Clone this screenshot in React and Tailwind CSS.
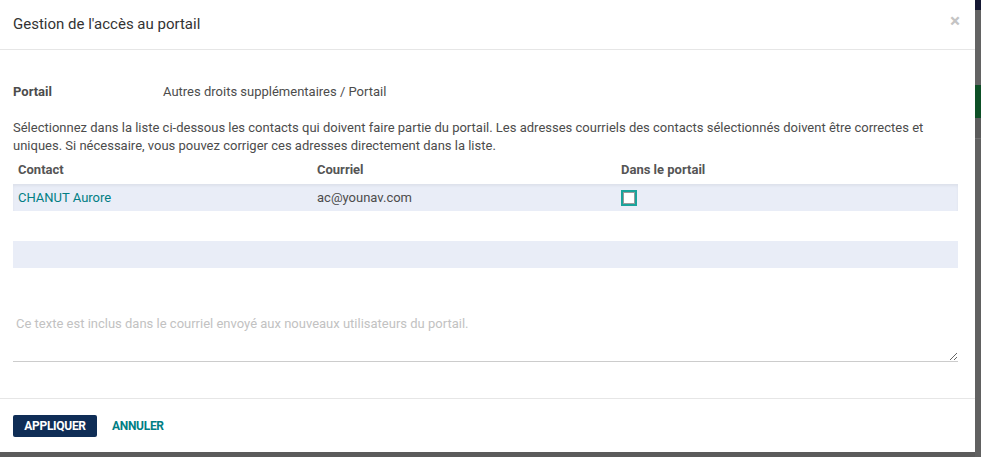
import React from "react";

const PortalAccessDialog = () => {
  return (
    <div className="w-[975px] h-[452px] bg-white flex flex-col shrink-0 text-[13px] text-[#4c4c4c]">
      {/* header */}
      <div className="h-[50px] px-[13px] flex items-center justify-between border-b border-[#e6e6e6]">
        <h4 className="text-[15px] text-[#333333] leading-none">Gestion de l'accès au portail</h4>
        <button className="text-[#c4c4c4] text-[19px] leading-none font-bold mr-[2px] -mt-[8px]">×</button>
      </div>

      {/* body */}
      <div className="flex-1 px-[13px] pt-[33px]">
        <div className="flex h-[18px] items-center">
          <span className="w-[150px] font-bold">Portail</span>
          <span>Autres droits supplémentaires / Portail</span>
        </div>

        <p className="mt-[18px] leading-[18px] pr-[20px]">
          Sélectionnez dans la liste ci-dessous les contacts qui doivent faire partie du portail. Les adresses courriels des contacts sélectionnés doivent être correctes et uniques. Si nécessaire, vous pouvez corriger ces adresses directement dans la liste.
        </p>

        <div className="w-[945px]">
          <div className="flex h-[29px] items-center font-bold text-[#555555]">
            <div className="w-[299px] pl-[5px]">Contact</div>
            <div className="w-[304px] pl-[5px]">Courriel</div>
            <div className="flex-1 pl-[5px]">Dans le portail</div>
          </div>
          <div className="flex h-[27px] items-center bg-[#e9edf7] shadow-[inset_0_2px_3px_rgba(0,0,0,0.05)]">
            <div className="w-[299px] pl-[5px] text-[#017e84]">CHANUT Aurore</div>
            <div className="w-[304px] pl-[5px]">ac@younav.com</div>
            <div className="flex-1 pl-[5px] flex items-center">
              <span className="w-[16px] h-[16px] border-2 border-[#1aa39b] bg-white shadow-[inset_0_0_0_1px_#9a9a9a]" />
            </div>
          </div>
          <div className="h-[30px]" />
          <div className="h-[27px] bg-[#e9edf7]" />
        </div>

        <div className="mt-[43px] w-[945px] relative">
          <textarea
            placeholder="Ce texte est inclus dans le courriel envoyé aux nouveaux utilisateurs du portail."
            className="w-full h-[51px] pt-[3px] px-[3px] border-b border-[#cccccc] outline-none resize-y text-[13px] placeholder:text-[#c2c2c2] block"
          />
        </div>
      </div>

      {/* footer */}
      <div className="h-[54px] px-[13px] flex items-center gap-[15px] border-t border-[#e6e6e6]">
        <button className="h-[22px] w-[84px] bg-[#0f2d56] text-white text-[12px] font-bold rounded-[2px] tracking-tight">
          APPLIQUER
        </button>
        <button className="text-[#017e84] text-[12px] font-bold tracking-tight">ANNULER</button>
      </div>
    </div>
  );
};

export default function App() {
  return (
    <div className="w-[981px] h-[457px] bg-[#5b5b5b] flex overflow-hidden font-['Roboto',_'Liberation_Sans',_sans-serif]">
      <PortalAccessDialog />
      {/* dimmed page behind */}
      <div className="flex-1 flex flex-col">
        <div className="h-[10px] bg-[#151833]" />
        <div className="h-[75px] bg-[#636363]" />
        <div className="h-[33px] bg-[#0d4f26]" />
        <div className="flex-1 bg-[#616161] border-t border-[#707070] mt-[20px]" />
      </div>
    </div>
  );
}
